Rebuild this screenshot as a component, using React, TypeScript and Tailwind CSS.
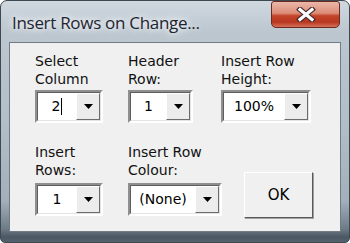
import React from "react";

const font = { fontFamily: '"DejaVu Sans", Tahoma, sans-serif' };

const Combo = ({ value, width, cursor }: { value: string; width: string; cursor?: boolean }) => (
  <div
    className={`flex h-[33px] ${width} border-2 border-t-[#8f8f8f] border-l-[#8f8f8f] border-b-white border-r-white`}
  >
    <div className="flex flex-1 border border-t-[#5e5e5e] border-l-[#5e5e5e] border-b-[#e3e3e3] border-r-[#e3e3e3] bg-white">
      <div className="flex flex-1 items-center justify-center text-[14px] text-black">
        <span>{value}</span>
        {cursor && <span className="ml-[1px] inline-block h-[17px] w-px bg-black" />}
      </div>
      <div className="flex w-[24px] items-center justify-center border border-t-white border-l-white border-b-[#6b6b6b] border-r-[#6b6b6b] bg-[#ececec]">
        <svg width="9" height="5" viewBox="0 0 9 5">
          <path d="M0 0h9L4.5 5z" fill="#000" />
        </svg>
      </div>
    </div>
  </div>
);

const Label = ({ children }: { children: React.ReactNode }) => (
  <div className="text-[14px] leading-[18px] text-[#111]">{children}</div>
);

export default function App() {
  return (
    <div className="h-[243px] w-[350px] overflow-hidden" style={font}>
      <div className="flex h-full w-full flex-col rounded-t-[7px] rounded-b-[5px] border border-[#3d4850] bg-[linear-gradient(180deg,#d0d8df_0px,#bcc7d0_30px,#b2bec8_120px,#a3b0bb_200px,#6d7b86_228px,#4b5863_236px,#56646f_242px)]">
        <div className="flex h-[41px] items-start justify-between">
          <div
            className="pl-[11px] pt-[9px] text-[17px] tracking-[-0.3px] text-[#1d2530] [text-shadow:0_0_6px_#fff,0_0_10px_#fff]"
            style={{ fontFamily: '"Open Sans", "Noto Sans", sans-serif' }}
          >
            Insert Rows on Change...
          </div>
          <div className="mr-[9px] flex h-[27px] w-[69px] items-center justify-center rounded-b-[5px] rounded-t-[3px] border border-[#6e2a20] bg-[linear-gradient(180deg,#eab8aa_0%,#dc8c76_45%,#c4442b_55%,#b8371f_80%,#d5705a_100%)]">
            <svg width="20" height="15" viewBox="0 0 20 15">
              <path d="M4 2.5l12 10M16 2.5L4 12.5" stroke="#3a2a28" strokeWidth="5.5" strokeLinecap="square" />
              <path d="M4 2.5l12 10M16 2.5L4 12.5" stroke="#fff" strokeWidth="3.2" strokeLinecap="square" />
            </svg>
          </div>
        </div>

        <div className="mx-[8px] flex-1 border border-[#6f7c86] bg-[#f0f0f0]">
          <div className="grid grid-cols-[93px_93px_1fr] pl-[25px] pt-[9px]">
            <div>
              <Label>
                Select
                <br />
                Column
              </Label>
              <div className="mt-[2px]">
                <Combo value="2" width="w-[68px]" cursor />
              </div>
            </div>
            <div>
              <Label>
                Header
                <br />
                Row:
              </Label>
              <div className="mt-[2px]">
                <Combo value="1" width="w-[65px]" />
              </div>
            </div>
            <div>
              <Label>
                Insert Row
                <br />
                Height:
              </Label>
              <div className="mt-[2px]">
                <Combo value="100%" width="w-[90px]" />
              </div>
            </div>

            <div className="mt-[20px]">
              <Label>
                Insert
                <br />
                Rows:
              </Label>
              <div className="mt-[4px]">
                <Combo value="1" width="w-[68px]" />
              </div>
            </div>
            <div className="mt-[20px]">
              <Label>
                Insert Row
                <br />
                Colour:
              </Label>
              <div className="mt-[4px]">
                <Combo value="(None)" width="w-[94px]" />
              </div>
            </div>
            <div className="mt-[49px] pl-[23px]">
              <button className="flex h-[46px] w-[69px] items-center justify-center border border-t-white border-l-white border-b-[#5a5a5a] border-r-[#5a5a5a] bg-[#f0f0f0] text-[15px] text-black shadow-[1px_1px_0_#a0a0a0]">
                OK
              </button>
            </div>
          </div>
        </div>
        <div className="h-[10px]" />
      </div>
    </div>
  );
}
